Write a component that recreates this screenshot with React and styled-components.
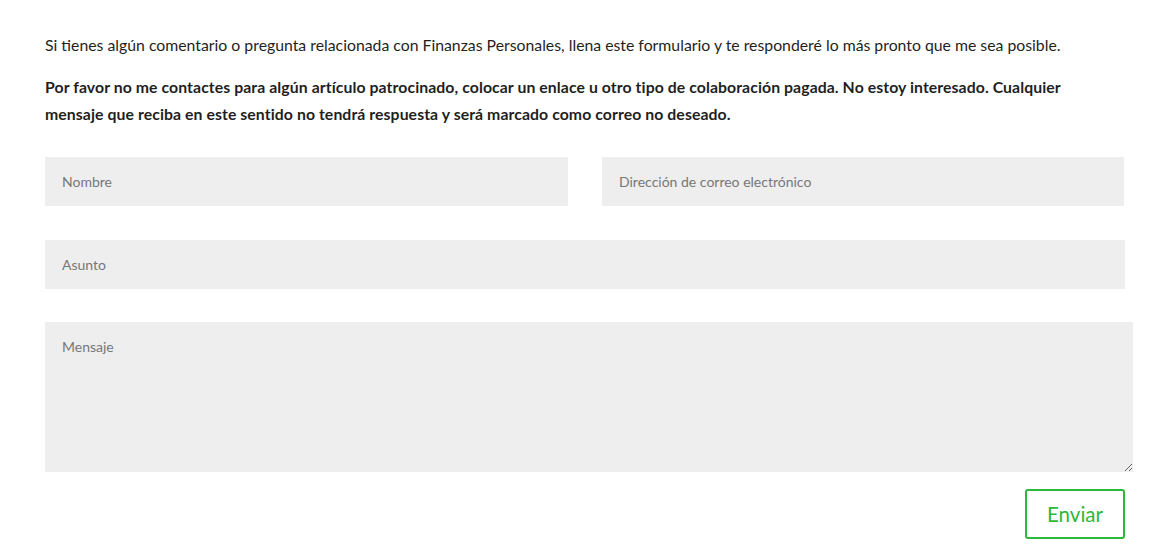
import React from "react";
import styled, { createGlobalStyle } from "styled-components";

const Global = createGlobalStyle`
  html, body { margin: 0; padding: 0; background: #fff; }
  body { font-family: Lato, "Open Sans", sans-serif; color: #222; }
  * { box-sizing: border-box; }
`;

const Page = styled.div`
  padding: 31px 0 0 45px;
  width: 1168px;
`;

const Intro = styled.p`
  margin: 0 0 15px;
  font-size: 15.8px;
  line-height: 27px;
  color: #1f1f1f;
  font-weight: ${(p) => (p.$bold ? 700 : 400)};
  letter-spacing: ${(p) => (p.$bold ? "0.08px" : "0")};
  width: 1060px;
`;

const Form = styled.form`
  margin-top: 30px;
  display: flex;
  flex-direction: column;
  gap: 34px;
  width: 1080px;
`;

const Row = styled.div`
  display: grid;
  grid-template-columns: ${(p) => (p.$split ? "523px 522px" : "1fr")};
  column-gap: 34px;
`;

const Field = styled.input`
  height: 49px;
  border: none;
  background: #eeeeee;
  padding: 0 17px;
  font-family: Lato, sans-serif;
  font-size: 14px;
  color: #333;
  outline: none;
  border-radius: 0;
  width: 100%;
  &::placeholder { color: #777; }
`;

const Area = styled.textarea`
  display: block;
  height: 150px;
  width: 1088px;
  margin-top: -1px;
  border: none;
  background: #eeeeee;
  padding: 16px 17px;
  font-family: Lato, sans-serif;
  font-size: 14px;
  line-height: 18px;
  color: #333;
  outline: none;
  border-radius: 0;
  &::placeholder { color: #777; }
`;

const Actions = styled.div`
  display: flex;
  justify-content: flex-end;
  margin-top: -17px;
`;

const Button = styled.button`
  width: 100px;
  height: 50px;
  background: #fff;
  border: 2px solid #2db837;
  border-radius: 3px;
  color: #2db837;
  font-family: Lato, sans-serif;
  font-size: 20.5px;
  cursor: pointer;
`;

export default function App() {
  return (
    <>
      <Global />
      <Page>
        <Intro>
          Si tienes algún comentario o pregunta relacionada con Finanzas Personales, llena este formulario y te responderé lo más pronto que me sea posible.
        </Intro>
        <Intro $bold>
          Por favor no me contactes para algún artículo patrocinado, colocar un enlace u otro tipo de colaboración pagada. No estoy interesado. Cualquier mensaje que reciba en este sentido no tendrá respuesta y será marcado como correo no deseado.
        </Intro>
        <Form onSubmit={(e) => e.preventDefault()}>
          <Row $split>
            <Field placeholder="Nombre" />
            <Field placeholder="Dirección de correo electrónico" />
          </Row>
          <Row>
            <Field placeholder="Asunto" />
          </Row>
          <Area placeholder="Mensaje" />
          <Actions>
            <Button type="submit">Enviar</Button>
          </Actions>
        </Form>
      </Page>
    </>
  );
}
